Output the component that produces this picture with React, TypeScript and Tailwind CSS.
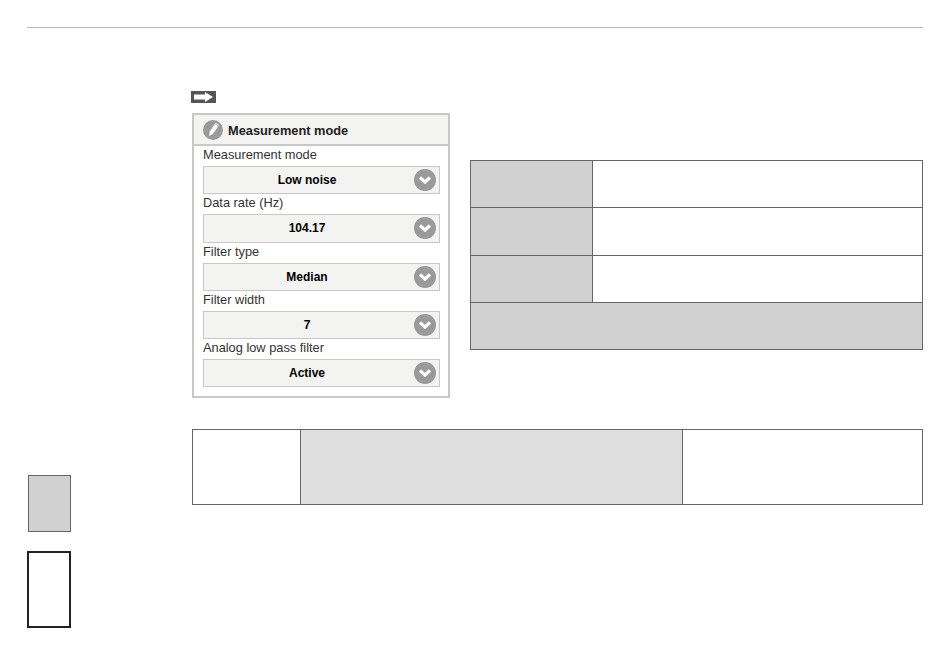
const fields = [
  { label: 'Measurement mode', value: 'Low noise' },
  { label: 'Data rate (Hz)', value: '104.17' },
  { label: 'Filter type', value: 'Median' },
  { label: 'Filter width', value: '7' },
  { label: 'Analog low pass filter', value: 'Active' },
];

const ChevronBadge = () => (
  <svg width="22" height="22" viewBox="0 0 22 22" className="shrink-0">
    <circle cx="11" cy="11" r="11" fill="#9a9a9a" />
    <path d="M6 8.5l5 4.5 5-4.5" fill="none" stroke="#fff" strokeWidth="3.2" />
  </svg>
);

const PencilBadge = () => (
  <svg width="20" height="20" viewBox="0 0 20 20" className="shrink-0">
    <circle cx="10" cy="10" r="10" fill="#9a9a9a" />
    <path d="M6 16l.8-4.4 5-7.6 3.4 2.2-5 7.6z" fill="#fff" />
    <path d="M12.6 2.8l3.4 2.2-.5.8-3.4-2.2z" fill="#fff" />
  </svg>
);

const ArrowTag = () => (
  <div className="-ml-px flex h-3 w-[25px] items-center justify-center bg-[#555]">
    <svg width="21" height="10" viewBox="0 0 21 10">
      <path d="M1 2.5h11V0l8 5-8 5V7.5H1z" fill="#fff" />
    </svg>
  </div>
);

const SelectRow = ({ label, value }: { label: string; value: string }) => (
  <div>
    <div className="h-[20px] text-[12.8px] leading-[17px] text-[#333]">{label}</div>
    <div className="flex h-[28.25px] w-[237px] items-center border border-[#c8c8c8] bg-[#f3f3f1] pr-[3px]">
      <span className="flex-1 pr-[4px] text-center text-xs font-bold text-black">{value}</span>
      <ChevronBadge />
    </div>
  </div>
);

const MeasurementPanel = () => (
  <div className="h-[285px] w-[258px] border-2 border-[#c8c8c8] bg-white">
    <div className="flex h-[31px] items-center gap-[5px] border-b-2 border-[#c8c8c8] bg-[#f3f3f1] pl-[9px]">
      <PencilBadge />
      <span className="pt-[2px] text-[12.8px] font-bold text-[#222]">Measurement mode</span>
    </div>
    <div className="pl-[9px]">
      {fields.map((f) => (
        <SelectRow key={f.label} label={f.label} value={f.value} />
      ))}
    </div>
  </div>
);

const SideTable = () => (
  <div className="grid h-[190px] w-[453px] grid-cols-[122px_1fr] grid-rows-[47px_48px_47px_1fr] border border-[#666]">
    <div className="border-r border-b border-[#666] bg-[#d1d1d1]" />
    <div className="border-b border-[#666]" />
    <div className="border-r border-b border-[#666] bg-[#d1d1d1]" />
    <div className="border-b border-[#666]" />
    <div className="border-r border-b border-[#666] bg-[#d1d1d1]" />
    <div className="border-b border-[#666]" />
    <div className="col-span-2 bg-[#d1d1d1]" />
  </div>
);

export default function App() {
  return (
    <div className="h-[657px] w-[950px] overflow-hidden bg-white px-[27px] pt-[27px] font-['Liberation_Sans',Arial,sans-serif]">
      <div className="h-px w-[896px] bg-[#b5b5b5]" />
      <div className="flex">
        <div className="flex w-[165px] flex-col pt-[447px]">
          <div className="ml-px h-[57px] w-[43px] border border-[#666] bg-[#d1d1d1]" />
          <div className="mt-[19px] h-[77px] w-[44px] border-2 border-[#222] bg-white" />
        </div>
        <div className="pt-[63px]">
          <ArrowTag />
          <div className="mt-[10px] flex">
            <MeasurementPanel />
            <div className="ml-[20px] pt-[47px]">
              <SideTable />
            </div>
          </div>
          <div className="mt-[31px] grid h-[76px] w-[731px] grid-cols-[108px_382px_1fr] border border-[#666]">
            <div className="border-r border-[#666]" />
            <div className="border-r border-[#666] bg-[#dfdfdf]" />
            <div />
          </div>
        </div>
      </div>
    </div>
  );
}
